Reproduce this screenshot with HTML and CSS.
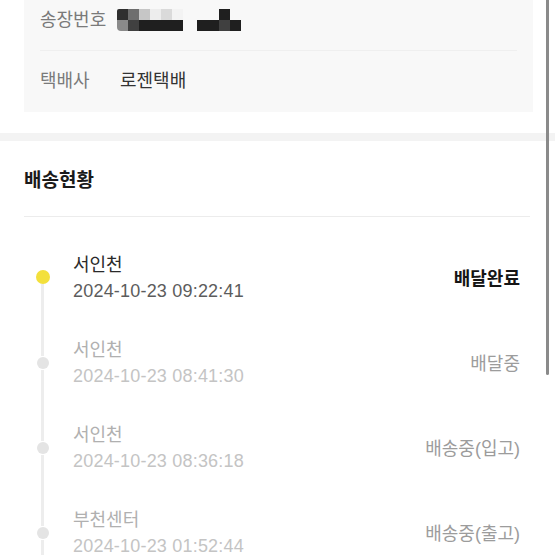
FILE: index.html
```html
<!DOCTYPE html>
<html lang="ko">
<head>
<meta charset="UTF-8" />
<meta name="viewport" content="width=device-width, initial-scale=1" />
<title>배송조회</title>
<link rel="stylesheet" href="styles.css">
</head>
<body>
  <div class="invoice-card">
    <div class="invoice-row first">
      <span class="invoice-label">송장번호</span>
      <span class="masked">
        <span class="mosaic six">
          <i class="c1"></i><i class="c2"></i><i class="c3"></i><i class="c4"></i><i class="c5"></i><i class="c6"></i>
          <i class="c7"></i><i class="c8"></i><i class="k"></i><i class="k"></i><i class="k"></i><i class="k"></i>
        </span>
        <span class="mosaic four">
          <i></i><i></i><i class="k"></i><i></i>
          <i class="k"></i><i class="k"></i><i class="c8"></i><i class="k"></i>
        </span>
      </span>
    </div>
    <div class="invoice-row">
      <span class="invoice-label">택배사</span>
      <span class="invoice-value">로젠택배</span>
    </div>
  </div>

  <div class="band"></div>

  <section class="tracking">
    <h2 class="tracking-title">배송현황</h2>
    <ul class="timeline">
      <li class="step current">
        <div class="marker"><span class="seg top"></span><span class="dot"></span><span class="seg"></span></div>
        <div class="step-info">
          <div class="step-place">서인천</div>
          <div class="step-time">2024-10-23 09:22:41</div>
        </div>
        <div class="step-status">배달완료</div>
      </li>
      <li class="step">
        <div class="marker"><span class="seg top"></span><span class="dot"></span><span class="seg"></span></div>
        <div class="step-info">
          <div class="step-place">서인천</div>
          <div class="step-time">2024-10-23 08:41:30</div>
        </div>
        <div class="step-status">배달중</div>
      </li>
      <li class="step">
        <div class="marker"><span class="seg top"></span><span class="dot"></span><span class="seg"></span></div>
        <div class="step-info">
          <div class="step-place">서인천</div>
          <div class="step-time">2024-10-23 08:36:18</div>
        </div>
        <div class="step-status">배송중(입고)</div>
      </li>
      <li class="step">
        <div class="marker"><span class="seg top"></span><span class="dot"></span><span class="seg"></span></div>
        <div class="step-info">
          <div class="step-place">부천센터</div>
          <div class="step-time">2024-10-23 01:52:44</div>
        </div>
        <div class="step-status">배송중(출고)</div>
      </li>
    </ul>
  </section>

  <div class="scroll-indicator"></div>
</body>
</html>
```

FILE: styles.css
```css
html {
  overflow: hidden;
}

body {
  margin: 0;
  background: #fff;
  font-family: "Liberation Sans", "Noto Sans CJK KR", sans-serif;
  color: #222;
}

/* 송장 정보 카드 */
.invoice-card {
  margin: 0 22px 0 24px;
  padding: 0 16px;
  background: #f8f8f8;
}
.invoice-row {
  display: flex;
  align-items: center;
  padding: 18px 0 19px;
  line-height: 24px;
  font-size: 18px;
}
.invoice-row.first {
  padding: 8px 0 18px;
  border-bottom: 1px solid #efefef;
}
.invoice-label {
  color: #7a7a7a;
  width: 80px;
}
.invoice-row.first .invoice-label {
  width: auto;
  margin-right: 11px;
}
.invoice-value {
  color: #333;
}

/* 모자이크 처리된 송장번호 */
.masked {
  display: flex;
  align-items: center;
  gap: 14px;
}
.mosaic {
  display: grid;
  grid-auto-rows: 11px;
}
.mosaic.six {
  grid-template-columns: repeat(6, 11px);
}
.mosaic.four {
  grid-template-columns: repeat(4, 11px);
}
.mosaic i {
  display: block;
}
.mosaic .k { background: #1f1f1f; }
.mosaic .c1 { background: #2f2f2f; border-top-left-radius: 2px; }
.mosaic .c2 { background: #6e6e6e; }
.mosaic .c3 { background: #c6c6c6; }
.mosaic .c4 { background: #ededed; }
.mosaic .c5 { background: #dadada; }
.mosaic .c6 { background: #f3f3f3; }
.mosaic .c7 { background: #8a8a8a; border-bottom-left-radius: 4px; }
.mosaic .c8 { background: #404040; }

.band {
  height: 8px;
  margin-top: 21px;
  background: #f3f3f3;
}

/* 배송현황 */
.tracking-title {
  margin: 0 25px 0 24px;
  padding: 27px 0 22px;
  border-bottom: 1px solid #ececec;
  font-size: 19px;
  line-height: 26px;
  font-weight: 700;
  color: #1a1a1a;
}

.timeline {
  list-style: none;
  margin: 0;
  padding: 18px 35px 0 24px;
}
.step {
  display: flex;
  align-items: stretch;
  height: 85px;
}
.marker {
  width: 37px;
  margin-right: 12px;
  flex-shrink: 0;
  display: flex;
  flex-direction: column;
  align-items: center;
}
.seg {
  width: 3px;
  flex: 1;
  background: #ededed;
}
.seg.top {
  flex: 0 0 36px;
}
.step.current .seg.top {
  background: transparent;
  flex-basis: 35px;
}
.dot {
  width: 12px;
  height: 12px;
  flex-shrink: 0;
  border-radius: 50%;
  background: #e4e4e4;
  margin: 1px 0;
}
.step.current .dot {
  width: 14px;
  height: 14px;
  margin: 0;
  background: #f3e03c;
}

.step-info {
  flex: 1;
  padding-top: 17px;
}
.step-place {
  font-size: 18px;
  line-height: 26px;
  color: #b0b0b0;
}
.step-time {
  font-size: 18px;
  line-height: 26px;
  letter-spacing: 0.2px;
  color: #c4c4c4;
}
.step-status {
  align-self: center;
  font-size: 18px;
  color: #9c9c9c;
  margin-top: -2px;
}
.step.current .step-place {
  color: #2a2a2a;
}
.step.current .step-time {
  color: #5c5c5c;
}
.step.current .step-status {
  color: #151515;
  font-weight: 700;
}

.scroll-indicator {
  position: fixed;
  top: 0;
  left: 546px;
  width: 3px;
  height: 375px;
  border-radius: 0 0 2px 2px;
  background: #8a8a8a;
}
```
